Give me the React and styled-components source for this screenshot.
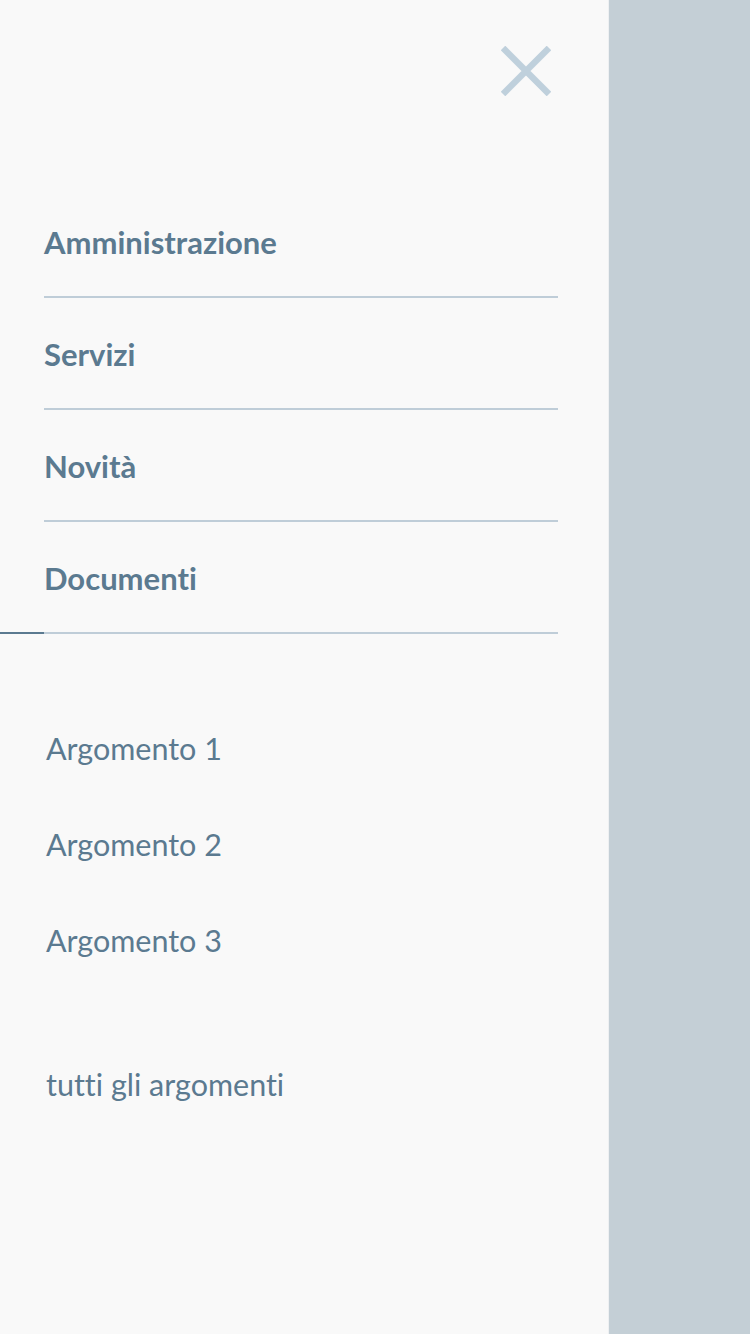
import styled, { createGlobalStyle } from "styled-components";

const GlobalStyle = createGlobalStyle`
  html, body {
    margin: 0;
    padding: 0;
  }
  body {
    font-family: Lato, "Open Sans", sans-serif;
    font-variant-ligatures: none;
  }
`;

const Page = styled.div`
  display: flex;
  width: 750px;
  height: 1334px;
  overflow: hidden;
`;

const Panel = styled.nav`
  width: 609px;
  flex-shrink: 0;
  background: #f9f9f9;
  border-right: 1px solid #eef0f2;
  padding: 46px 50px 0 44px;
  box-sizing: border-box;
  display: flex;
  flex-direction: column;
`;

const Overlay = styled.div`
  flex: 1;
  background: #c4cfd6;
`;

const Header = styled.div`
  display: flex;
  justify-content: flex-end;
  padding-right: 7px;
  height: 50px;
  margin-bottom: 90px;
`;

const CloseButton = styled.button`
  width: 50px;
  height: 50px;
  padding: 0;
  border: 0;
  background: none;
  cursor: pointer;
  svg {
    display: block;
  }
`;

const MainList = styled.ul`
  list-style: none;
  margin: 0;
  padding: 0;
`;

const MainItem = styled.li`
  position: relative;
  height: 112px;
  padding-top: 2px;
  box-sizing: border-box;
  display: flex;
  align-items: center;
  border-bottom: 2px solid #bfcdd8;
  font-size: 31px;
  font-weight: 700;
  color: #5b7a90;

  ${(p) =>
    p.$active &&
    `
    &::after {
      content: "";
      position: absolute;
      left: -44px;
      bottom: -2px;
      width: 44px;
      height: 2px;
      background: #5b7a90;
    }
  `}
`;

const SubList = styled.ul`
  list-style: none;
  margin: 66px 0 0;
  padding: 0 0 0 2px;
`;

const SubItem = styled.li`
  height: 96px;
  display: flex;
  align-items: center;
  font-size: 30.5px;
  font-weight: 400;
  color: #5b7a90;
  margin-top: ${(p) => (p.$spaced ? "48px" : "0")};
`;

const mainLinks = ["Amministrazione", "Servizi", "Novità", "Documenti"];
const topics = ["Argomento 1", "Argomento 2", "Argomento 3"];

export default function App() {
  return (
    <>
      <GlobalStyle />
      <Page>
        <Panel>
          <Header>
            <CloseButton aria-label="Chiudi menu">
              <svg width="50" height="50" viewBox="0 0 50 50">
                <path
                  d="M2 2 L48 48 M48 2 L2 48"
                  stroke="#bfd0dc"
                  strokeWidth="6.5"
                  fill="none"
                />
              </svg>
            </CloseButton>
          </Header>
          <MainList>
            {mainLinks.map((l, i) => (
              <MainItem key={l} $active={i === mainLinks.length - 1}>
                {l}
              </MainItem>
            ))}
          </MainList>
          <SubList>
            {topics.map((t) => (
              <SubItem key={t}>{t}</SubItem>
            ))}
            <SubItem $spaced>tutti gli argomenti</SubItem>
          </SubList>
        </Panel>
        <Overlay />
      </Page>
    </>
  );
}
